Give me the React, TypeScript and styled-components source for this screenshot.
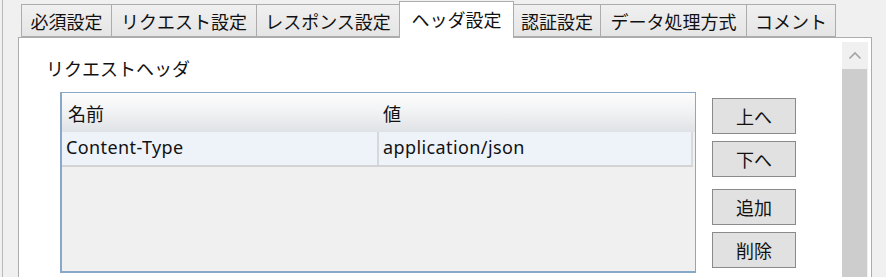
import styled, { createGlobalStyle } from 'styled-components';

const tabs = [
  { label: '必須設定', width: 90 },
  { label: 'リクエスト設定', width: 145 },
  { label: 'レスポンス設定', width: 143 },
  { label: 'ヘッダ設定', width: 114, active: true },
  { label: '認証設定', width: 87 },
  { label: 'データ処理方式', width: 146 },
  { label: 'コメント', width: 89 },
];

const headers = [{ name: 'Content-Type', value: 'application/json' }];

const buttons = [
  { label: '上へ', gap: 0 },
  { label: '下へ', gap: 7 },
  { label: '追加', gap: 12 },
  { label: '削除', gap: 7 },
];

export default function App() {
  return (
    <>
      <GlobalStyle />
      <Frame>
        <Inner>
          <TabStrip>
            {tabs.map((tab) => (
              <Tab key={tab.label} $width={tab.width} $active={!!tab.active}>
                {tab.label}
              </Tab>
            ))}
          </TabStrip>
          <Panel>
            <Content>
              <Label>リクエストヘッダ</Label>
              <Row>
                <Table>
                  <HeaderRow>
                    <HeaderCell>名前</HeaderCell>
                    <HeaderCell>値</HeaderCell>
                  </HeaderRow>
                  {headers.map((h) => (
                    <DataRow key={h.name}>
                      <Cell>{h.name}</Cell>
                      <Cell>{h.value}</Cell>
                    </DataRow>
                  ))}
                </Table>
                <ButtonColumn>
                  {buttons.map((b) => (
                    <Button key={b.label} $gap={b.gap}>
                      {b.label}
                    </Button>
                  ))}
                </ButtonColumn>
              </Row>
            </Content>
            <ScrollBar>
              <ArrowButton>
                <svg width="14" height="9" viewBox="0 0 14 9">
                  <polyline points="1.5,7.5 7,2 12.5,7.5" fill="none" stroke="#a3a3a3" strokeWidth="1.6" />
                </svg>
              </ArrowButton>
              <Thumb />
            </ScrollBar>
          </Panel>
        </Inner>
      </Frame>
    </>
  );
}

const GlobalStyle = createGlobalStyle`
  html, body {
    margin: 0;
    padding: 0;
    background: #f0f0f0;
    overflow: hidden;
  }
  body {
    font-family: "Noto Sans", "Noto Sans CJK JP", sans-serif;
    font-size: 18px;
    color: #111;
  }
`;

const Frame = styled.div`
  height: 277px;
  padding-left: 2px;
  overflow: hidden;
`;

const Inner = styled.div`
  height: 100%;
  border-left: 1px solid #b9b9b9;
  padding-left: 15px;
  padding-top: 1px;
  box-sizing: border-box;
  display: flex;
  flex-direction: column;
`;

const TabStrip = styled.div`
  display: flex;
  align-items: flex-end;
  height: 36px;
  flex-shrink: 0;
  padding-left: 3px;
  position: relative;
  z-index: 1;
`;

const Tab = styled.div<{ $width: number; $active: boolean }>`
  width: ${(p) => p.$width + 1}px;
  height: ${(p) => (p.$active ? 37 : 33)}px;
  box-sizing: border-box;
  display: flex;
  align-items: center;
  justify-content: center;
  padding-bottom: ${(p) => (p.$active ? 3 : 0)}px;
  margin-bottom: ${(p) => (p.$active ? -1 : 0)}px;
  margin-right: -1px;
  border: 1px solid #acacac;
  border-bottom: ${(p) => (p.$active ? 'none' : '1px solid #acacac')};
  background: ${(p) => (p.$active ? '#ffffff' : 'linear-gradient(#f0f0f0, #e5e5e5)')};
  white-space: nowrap;
  z-index: ${(p) => (p.$active ? 2 : 1)};
`;

const Panel = styled.div`
  width: 854px;
  flex: 1;
  min-height: 0;
  box-sizing: border-box;
  background: #ffffff;
  border: 1px solid #acacac;
  border-bottom: none;
  display: flex;
`;

const Content = styled.div`
  flex: 1;
  padding: 18px 0 0 27px;
`;

const Label = styled.div`
  line-height: 26px;
  margin-bottom: 10px;
`;

const Row = styled.div`
  display: flex;
  align-items: flex-start;
  margin-left: 14px;
  gap: 16px;
`;

const Table = styled.div`
  width: 636px;
  height: 181px;
  box-sizing: border-box;
  border: 1px solid #89a7c7;
  border-left-width: 2px;
  border-bottom-width: 2px;
  background: #f0f0f0;
`;

const HeaderRow = styled.div`
  display: grid;
  grid-template-columns: 315px 1fr;
  height: 39px;
  background: linear-gradient(#fdfdfd, #f2f3f4 45%, #dfe2e6);
`;

const HeaderCell = styled.div`
  display: flex;
  align-items: center;
  padding-left: 6px;
`;

const DataRow = styled.div`
  display: grid;
  grid-template-columns: 315px 1fr;
  height: 35px;
  box-sizing: border-box;
  margin-right: 2px;
  background: #eef2f9;
  border-bottom: 2px solid #d3d3d3;
  border-right: 2px solid #dadada;
`;

const Cell = styled.div`
  display: flex;
  align-items: center;
  padding-left: 4px;
  padding-bottom: 3px;
  letter-spacing: 0.4px;
  & + & {
    border-left: 2px solid #d8d8d8;
  }
`;

const ButtonColumn = styled.div`
  display: flex;
  flex-direction: column;
  padding-top: 6px;
`;

const Button = styled.div<{ $gap: number }>`
  width: 84px;
  height: 36px;
  box-sizing: border-box;
  margin-top: ${(p) => p.$gap}px;
  display: flex;
  align-items: center;
  justify-content: center;
  background: #e1e1e1;
  border: 1px solid #8a8a8a;
`;

const ScrollBar = styled.div`
  width: 26px;
  margin: 4px 3px 0 0;
  display: flex;
  flex-direction: column;
  background: #f0f0f0;
`;

const ArrowButton = styled.div`
  height: 27px;
  display: flex;
  align-items: center;
  justify-content: center;
`;

const Thumb = styled.div`
  flex: 1;
  background: #cdcdcd;
  margin-right: 1px;
`;
